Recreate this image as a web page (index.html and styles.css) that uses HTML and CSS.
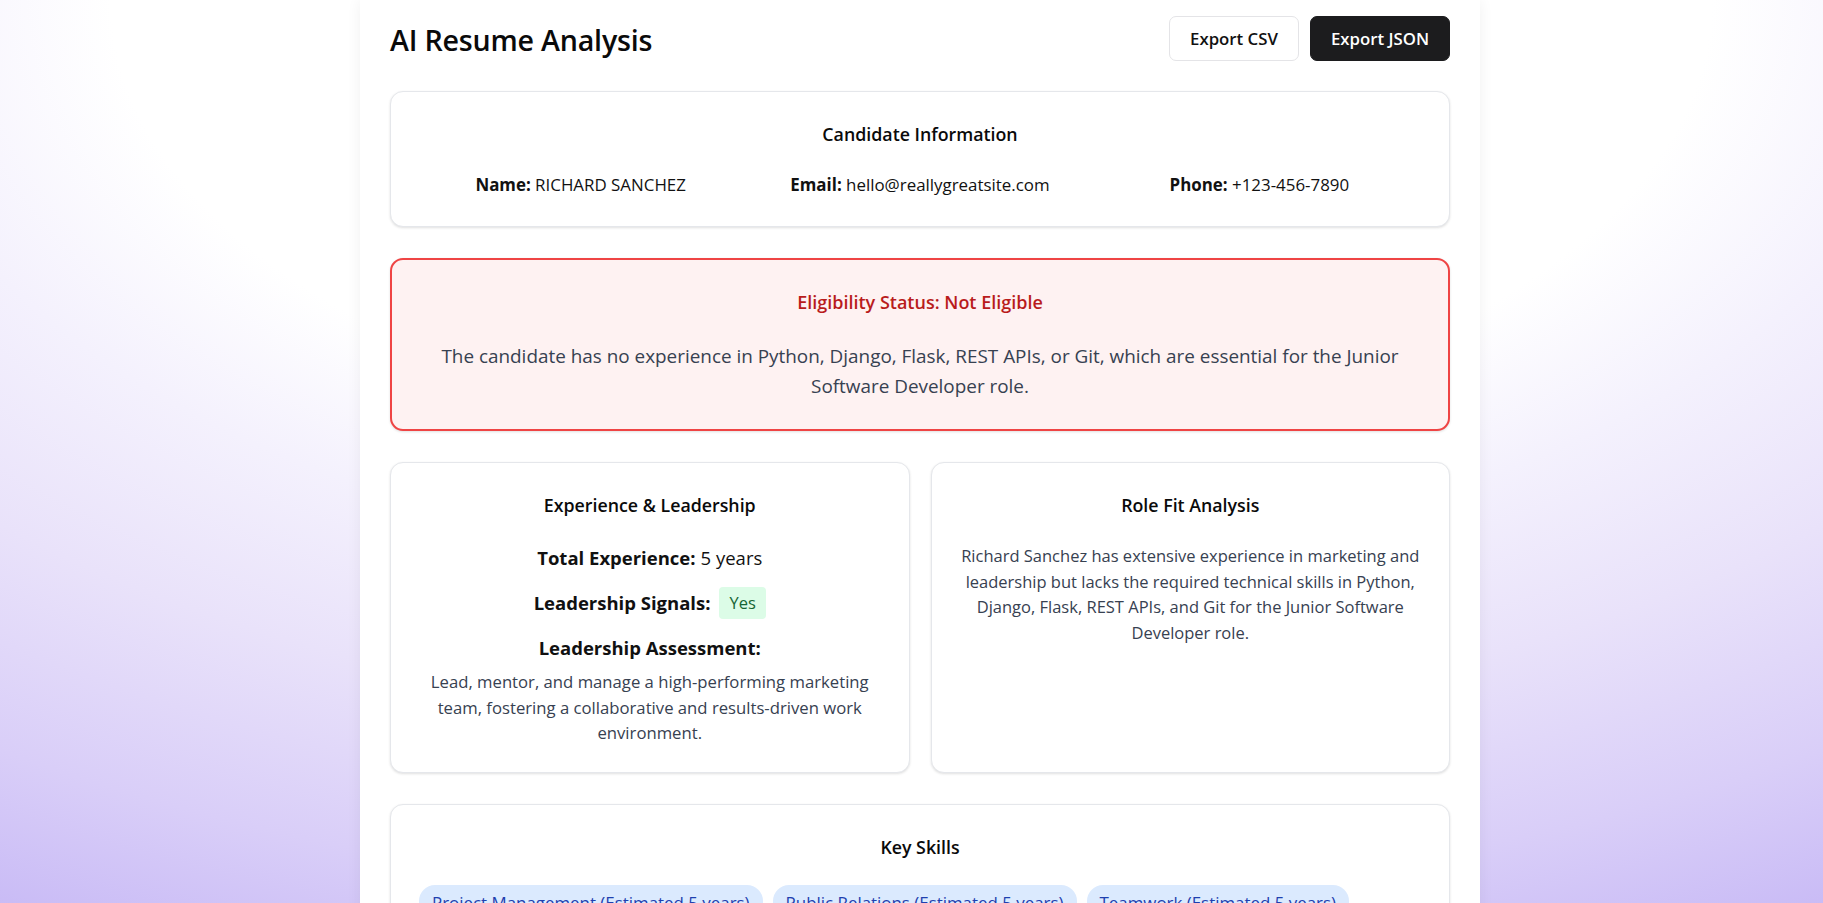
FILE: index.html
```html
<!DOCTYPE html>
<html lang="en">
<head>
<meta charset="utf-8">
<title>AI Resume Analysis</title>
<link rel="stylesheet" href="styles.css">
</head>
<body>
<main class="page">
  <header class="header">
    <h1 class="title">AI Resume Analysis</h1>
    <div class="actions">
      <button class="btn btn-light">Export CSV</button>
      <button class="btn btn-dark">Export JSON</button>
    </div>
  </header>

  <section class="card">
    <h2 class="card-title">Candidate Information</h2>
    <div class="info-row">
      <div class="info-item"><strong>Name:</strong> RICHARD SANCHEZ</div>
      <div class="info-item"><strong>Email:</strong> hello@reallygreatsite.com</div>
      <div class="info-item"><strong>Phone:</strong> +123-456-7890</div>
    </div>
  </section>

  <section class="card card-alert">
    <h2 class="alert-title">Eligibility Status: Not Eligible</h2>
    <p class="alert-text">The candidate has no experience in Python, Django, Flask, REST APIs, or Git, which are essential for the Junior Software Developer role.</p>
  </section>

  <div class="two-col">
    <section class="card">
      <h2 class="card-title">Experience &amp; Leadership</h2>
      <div class="stat stat-first"><strong>Total Experience:</strong> 5 years</div>
      <div class="stat"><strong>Leadership Signals:</strong> <span class="badge-yes">Yes</span></div>
      <div class="stat"><strong>Leadership Assessment:</strong></div>
      <p class="para">Lead, mentor, and manage a high-performing marketing team, fostering a collaborative and results-driven work environment.</p>
    </section>
    <section class="card">
      <h2 class="card-title">Role Fit Analysis</h2>
      <p class="para para-fit">Richard Sanchez has extensive experience in marketing and leadership but lacks the required technical skills in Python, Django, Flask, REST APIs, and Git for the Junior Software Developer role.</p>
    </section>
  </div>

  <section class="card">
    <h2 class="card-title">Key Skills</h2>
    <div class="chips">
      <span class="chip">Project Management (Estimated 5 years)</span>
      <span class="chip">Public Relations (Estimated 5 years)</span>
      <span class="chip">Teamwork (Estimated 5 years)</span>
      <span class="chip">Time Management (Estimated 5 years)</span>
      <span class="chip">Leadership (Estimated 5 years)</span>
    </div>
  </section>
</main>
</body>
</html>
```

FILE: styles.css
```css
* { box-sizing: border-box; }

html, body { height: 100%; }

body {
  margin: 0;
  padding-left: 17px;
  overflow: hidden;
  font-family: "Open Sans", "Noto Sans", sans-serif;
  color: #111;
  background:
    radial-gradient(ellipse 800px 440px at 50% 0%, #ffffff 0%, #ffffff 100%, #f4f1fd 130%, #e9e2fa 165%, #d9cef8 205%, #c4b5f5 245%);
  background-color: #c4b5f5;
}

.page {
  width: 1120px;
  margin: 0 auto;
  min-height: 100%;
  background: #fff;
  padding: 16px 30px 40px;
  box-shadow: 0 0 14px rgba(0, 0, 0, 0.06);
}

.header {
  display: flex;
  justify-content: space-between;
  align-items: center;
  height: 45px;
  margin-bottom: 30px;
}

.title {
  margin: 0;
  font-size: 28.6px;
  font-weight: 600;
  letter-spacing: -0.2px;
  color: #0a0a0a;
  position: relative;
  top: 1px;
}

.actions { display: flex; gap: 11px; }

.btn {
  font-family: inherit;
  font-size: 16.8px;
  font-weight: 600;
  height: 45px;
  border-radius: 7px;
  cursor: pointer;
}

.btn-light {
  width: 130px;
  background: #fff;
  color: #111;
  border: 1px solid #e4e4e7;
}

.btn-dark {
  width: 140px;
  background: #1c1c1e;
  color: #fff;
  border: 1px solid #1c1c1e;
}

.card {
  background: #fff;
  border: 1px solid #e5e7eb;
  border-radius: 13px;
  box-shadow: 0 1px 3px rgba(0, 0, 0, 0.09), 0 1px 2px rgba(0, 0, 0, 0.04);
  padding: 28px;
  margin-bottom: 31px;
  text-align: center;
}

.card-title {
  margin: 0 0 24px;
  font-size: 17.8px;
  line-height: 28px;
  font-weight: 600;
  color: #0a0a0a;
}

.info-row {
  display: grid;
  grid-template-columns: repeat(3, 1fr);
  margin: 0 -8px;
  font-size: 16.9px;
  line-height: 26px;
  color: #111;
}

.info-item strong { font-weight: 700; }

.card-alert {
  background: #fef2f2;
  border: 2px solid #ef4444;
  padding: 28px 40px;
}

.alert-title {
  margin: 0 0 25px;
  font-size: 18px;
  line-height: 28px;
  font-weight: 600;
  color: #b91c1c;
}

.alert-text {
  margin: 0;
  font-size: 18.9px;
  line-height: 30px;
  color: #374151;
}

.two-col {
  display: grid;
  grid-template-columns: 1fr 1fr;
  gap: 21px;
  margin-bottom: 31px;
}

.two-col .card { margin-bottom: 0; padding-bottom: 26px; }

.stat {
  font-size: 18.5px;
  line-height: 30px;
  margin-top: 14px;
  display: flex;
  justify-content: center;
  align-items: center;
  gap: 9px;
}

.stat-first { margin-top: 0; gap: 5px; }

.stat strong { font-weight: 700; }

.badge-yes {
  display: inline-block;
  background: #dcfce7;
  color: #166534;
  font-size: 16.5px;
  line-height: 24px;
  padding: 4px 10px;
  border-radius: 4px;
}

.para {
  margin: 6px 0 0;
  font-size: 16.7px;
  line-height: 25.5px;
  color: #374151;
}

.para-fit {
  margin: 2px -6px 0;
  font-size: 16.5px;
}

.chips {
  display: flex;
  flex-wrap: wrap;
  gap: 10px;
  justify-content: flex-start;
}

.chip {
  background: #dbeafe;
  color: #1e40af;
  font-size: 16.9px;
  line-height: 24px;
  padding: 6px 13px;
  border-radius: 16px;
}
```
